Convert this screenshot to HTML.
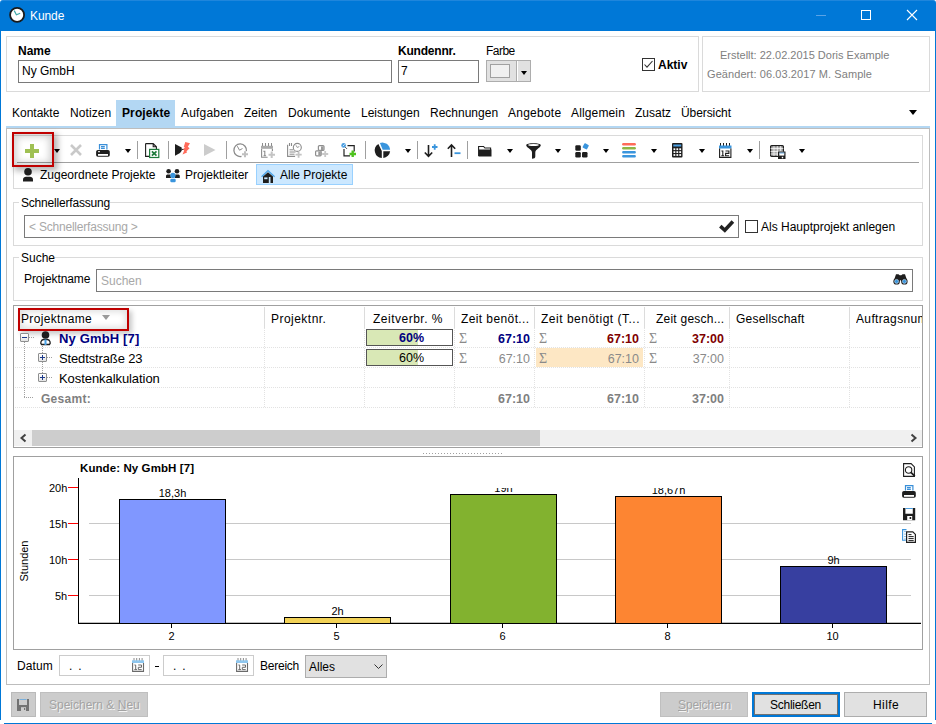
<!DOCTYPE html>
<html><head><meta charset="utf-8">
<style>
*{margin:0;padding:0;box-sizing:border-box}
html,body{width:936px;height:724px;overflow:hidden;background:#fff}
body{position:relative;font-family:"Liberation Sans",sans-serif;font-size:12px;color:#000}
.a{position:absolute}
.t{position:absolute;white-space:nowrap;line-height:14px;font-size:12px}
.b{font-weight:bold}
.box{position:absolute;border:1px solid #dadada}
.inp{position:absolute;border:1px solid #7a7a7a;background:#fff}
.arr{position:absolute;width:0;height:0;border-left:3.5px solid transparent;border-right:3.5px solid transparent;border-top:4px solid #000}
.sep{position:absolute;width:1px;background:#a0a0a0;top:141px;height:18px}
svg{position:absolute;overflow:visible}
.hs{top:307px;width:1px;height:21px;background:#dcdcdc}
.hd{left:15px;width:906px;height:1px;background:repeating-linear-gradient(to right,#e2e2e2 0 1px,transparent 1px 2px)}
.vd{top:328px;width:1px;height:80px;background:repeating-linear-gradient(to bottom,#e2e2e2 0 1px,transparent 1px 2px)}
.exp{width:9px;height:9px;border:1px solid #8e8f8f;border-radius:1px;background:linear-gradient(#fff,#e4e4e4)}
.exp .h{position:absolute;left:1px;top:3px;width:5px;height:1px;background:#1c3a8a}
.exp .v{position:absolute;left:3px;top:1px;width:1px;height:5px;background:#1c3a8a}
.pb{left:366px;width:87px;height:17px;border:1px solid #555;background:#fff;text-align:center;line-height:15px}
.pb .pf{position:absolute;left:0;top:0;width:51px;height:15px;background:#d9e8b6}
.pb span{position:relative;top:1px;left:2px;font-size:12.5px}
.sg{color:#8a8a8a;font-family:"Liberation Serif",serif;font-size:14px;line-height:15px}
.r{text-align:right;font-size:12.5px;line-height:15px}
.df{top:655px;width:91px;height:21px;border:1px solid #cccccc;background:#fff}
.gl{left:89px;width:822px;height:1px;background:#c8c8c8}
.tk{left:68px;width:10px;height:1px;background:#ff0000}
.yl{font-size:11px;line-height:13px}
.bar{border:1px solid #000}
.bl{font-size:11px;line-height:13px;text-align:center}
.xt{top:624px;width:1px;height:4px;background:#000}
.xl{top:630px;width:41px;text-align:center;font-size:11px;line-height:13px}
</style></head><body>
<!-- window frame -->
<div class="a" style="left:0;top:0;width:936px;height:31px;background:#0078d7;border-radius:3px 3px 0 0;border-top:1px solid #1f86dc"></div>
<div class="a" style="left:0;top:31px;width:1px;height:689px;background:#0078d7"></div>
<div class="a" style="left:935px;top:31px;width:1px;height:689px;background:#0078d7"></div>
<div class="a" style="left:4px;top:723px;width:928px;height:1px;background:#0078d7"></div>
<!-- title -->
<svg style="left:9px;top:7px" width="16" height="16" viewBox="0 0 16 16"><circle cx="8.1" cy="7.9" r="7" fill="#fff" stroke="#1a1a1a" stroke-width="1.8"/><path d="M5.2 3.6 L7.4 7.8 L11.2 6.2" fill="none" stroke="#3fa9a9" stroke-width="1.2"/></svg>
<div class="t" style="left:30px;top:9px;color:#fff;letter-spacing:-0.08px">Kunde</div>
<div class="a" style="left:816px;top:15px;width:10px;height:1px;background:#5aa3e6"></div>
<div class="a" style="left:861px;top:10px;width:10px;height:10px;border:1px solid #fff"></div>
<svg style="left:907px;top:10px" width="10" height="10" viewBox="0 0 10 10"><path d="M0 0L10 10M10 0L0 10" stroke="#fff" stroke-width="1.1"/></svg>

<!-- header -->
<div class="box" style="left:6px;top:36px;width:693px;height:56px"></div>
<div class="box" style="left:702px;top:36px;width:228px;height:56px"></div>
<div class="t b" style="left:18px;top:44px">Name</div>
<div class="inp" style="left:18px;top:60px;width:374px;height:23px"></div>
<div class="t" style="left:22px;top:64px">Ny GmbH</div>
<div class="t b" style="left:398px;top:44px;letter-spacing:-0.20px">Kundennr.</div>
<div class="inp" style="left:398px;top:60px;width:81px;height:23px"></div>
<div class="t" style="left:401px;top:64px">7</div>
<div class="t" style="left:486px;top:44px;letter-spacing:-0.53px">Farbe</div>
<div class="a" style="left:486px;top:60px;width:45px;height:22px;background:#e1e1e1;border:1px solid #adadad"></div>
<div class="a" style="left:516px;top:61px;width:1px;height:20px;background:#adadad"></div>
<div class="a" style="left:517px;top:61px;width:1px;height:20px;background:#fff"></div>
<div class="a" style="left:490px;top:64px;width:20px;height:14px;background:#f0f0f0;border:1px solid #a0a0a0"></div>
<div class="arr" style="left:521px;top:71px"></div>
<div class="a" style="left:642px;top:58px;width:13px;height:13px;border:1px solid #333"></div>
<svg style="left:642px;top:58px" width="13" height="13" viewBox="0 0 13 13"><path d="M2.5 6.5 L5 9.2 L10.5 3" fill="none" stroke="#333" stroke-width="1.1"/></svg>
<div class="t b" style="left:658px;top:58px">Aktiv</div>
<div class="t" style="left:720px;top:49px;color:#808080;font-size:11px;line-height:13px">Erstellt: 22.02.2015 Doris Example</div>
<div class="t" style="left:707px;top:68px;color:#808080;font-size:11px;line-height:13px;letter-spacing:0.08px">Geändert: 06.03.2017 M. Sample</div>

<!-- tabs -->
<div class="a" style="left:116px;top:100px;width:59px;height:27px;background:#b3d7f3"></div>
<div class="t" style="left:12px;top:106px">Kontakte</div>
<div class="t" style="left:70px;top:106px;letter-spacing:0.10px">Notizen</div>
<div class="t b" style="left:122px;top:106px;letter-spacing:0.12px">Projekte</div>
<div class="t" style="left:181px;top:106px;letter-spacing:0.20px">Aufgaben</div>
<div class="t" style="left:244px;top:106px;letter-spacing:-0.06px">Zeiten</div>
<div class="t" style="left:288px;top:106px;letter-spacing:0.12px">Dokumente</div>
<div class="t" style="left:361px;top:106px">Leistungen</div>
<div class="t" style="left:430px;top:106px">Rechnungen</div>
<div class="t" style="left:508px;top:106px;letter-spacing:0.24px">Angebote</div>
<div class="t" style="left:571px;top:106px;letter-spacing:0.14px">Allgemein</div>
<div class="t" style="left:635px;top:106px">Zusatz</div>
<div class="t" style="left:681px;top:106px;letter-spacing:-0.08px">Übersicht</div>
<div class="a" style="left:909px;top:110px;width:0;height:0;border-left:4.5px solid transparent;border-right:4.5px solid transparent;border-top:5px solid #000"></div>

<!-- main panel -->
<div class="a" style="left:6px;top:126px;width:924px;height:2px;background:#b3d7f3"></div>
<div class="a" style="left:6px;top:128px;width:924px;height:557px;border:1px solid #bdbdbd"></div>

<!-- toolbar box -->
<div class="box" style="left:13px;top:135px;width:910px;height:54px"></div>
<div class="a" style="left:17px;top:162px;width:902px;height:1px;background:#a0a0a0"></div>
<!-- red highlight -->
<div class="a" style="left:12px;top:132px;width:42px;height:35px;border:2px solid #c00000;box-shadow:3px 3px 6px 1px rgba(0,0,0,.28), inset 0 0 7px 3px rgba(0,0,0,.18)"></div>
<svg style="left:25px;top:144px" width="14" height="14" viewBox="0 0 14 14"><path d="M5 0h4v5h5v4h-5v5h-4v-5h-5v-4h5z" fill="#9fc053"/></svg>
<div class="arr" style="left:54px;top:149px"></div>
<svg style="left:70px;top:144px" width="12" height="12" viewBox="0 0 12 12"><path d="M1 1L11 11M11 1L1 11" stroke="#c9c9c9" stroke-width="2.6"/></svg>
<svg style="left:96px;top:144px" width="14" height="13" viewBox="0 0 14 13"><path d="M3.5 5.5V0.7h7.4v4.8M5 2.6h3.8M5 4.4h3.8" fill="none" stroke="#3a8fd8" stroke-width="1.2"/><rect x="0.1" y="6" width="13.7" height="6.8" rx="1.8" fill="#1e1e1e"/><rect x="2" y="10" width="10" height="1.8" fill="#fff"/><rect x="2" y="7.2" width="2" height="1" fill="#fff"/></svg>
<div class="arr" style="left:125px;top:149px"></div>
<div class="sep" style="left:137px"></div>
<svg style="left:145px;top:143px" width="15" height="15" viewBox="0 0 15 15"><path d="M0.6 0.6h7.6l3.2 3.2v2.5M4.5 13.4H0.6V0.6M8.2 0.6v3.2h3.2" fill="none" stroke="#1e1e1e" stroke-width="1.1"/><rect x="4.6" y="6.4" width="9.2" height="8.1" fill="#fff" stroke="#1e7b3c" stroke-width="1.2"/><path d="M6.9 8.4l4.6 4.2M11.5 8.4L6.9 12.6" stroke="#1e7b3c" stroke-width="1.7"/></svg>
<div class="sep" style="left:168px"></div>
<svg style="left:175px;top:142px" width="16" height="14" viewBox="0 0 16 14"><path d="M0 2L6.7 5.5V8.7L5 11L0 13.7Z" fill="#1e1e1e"/><path d="M6.5 7.4h2.4" stroke="#1e1e1e" stroke-width="1"/><path d="M10.3 0L15 1.2L12.8 4.8L14.6 6.3L11.5 9.3L12 10.5L7.5 12.6L9.2 8.6L8.2 7.4L9.8 5.3L8.8 4.8Z" fill="#ff6b5a"/></svg>
<svg style="left:204px;top:144px" width="12" height="12" viewBox="0 0 12 12"><path d="M0 0L11.5 6L0 12Z" fill="#cccccc"/></svg>
<div class="sep" style="left:226px"></div>
<svg style="left:233px;top:143px" width="15" height="15" viewBox="0 0 15 15"><path d="M8.5 13.4A6.3 6.3 0 1 1 13.4 8.2" fill="none" stroke="#8c8c8c" stroke-width="1.3"/><path d="M4.3 3.2L6.5 7.2L9.5 5.5" fill="none" stroke="#8c8c8c" stroke-width="1"/><path d="M9 11.3h6M12 8.3v6" stroke="#c0c0c0" stroke-width="2"/></svg>
<svg style="left:261px;top:143px" width="14" height="15" viewBox="0 0 14 15"><rect x="0" y="2.8" width="12" height="3" fill="#aaa"/><path d="M1.5 0v3M4.5 0v3M7.5 0v3M10.5 0v3" stroke="#8c8c8c" stroke-width="1"/><path d="M0.6 6v8.2h6M11.4 6v2" fill="none" stroke="#8c8c8c" stroke-width="1.1"/><path d="M2.3 8.3h1.5v4.5M2.5 12.8h2.6" fill="none" stroke="#8c8c8c" stroke-width="1.1"/><path d="M7.5 11.7h6.5M10.7 8.5v6.5" stroke="#c4c4c4" stroke-width="2"/></svg>
<svg style="left:287px;top:143px" width="15" height="15" viewBox="0 0 15 15"><path d="M0.6 1.8v11.6h7.5M2.5 0v3M4.5 0v3" fill="none" stroke="#8c8c8c" stroke-width="1.1"/><path d="M2.5 6.8h4M2.5 9h6M2.5 11.2h5" stroke="#8c8c8c" stroke-width="1"/><circle cx="10.3" cy="4.4" r="4" fill="#fff" stroke="#8c8c8c" stroke-width="1.1"/><path d="M9 2.3l1.3 2.2l2-1" fill="none" stroke="#8c8c8c" stroke-width=".9"/><path d="M8.5 11.7h6.2M11.6 8.7v6" stroke="#c4c4c4" stroke-width="1.8"/></svg>
<svg style="left:315px;top:143px" width="14" height="15" viewBox="0 0 14 15"><rect x="3.4" y="2.6" width="5.6" height="4.8" rx="1" fill="#fff" stroke="#8e8e8e" stroke-width="1.2"/><rect x="6" y="3.4" width="2.5" height="3.6" fill="#9a9a9a"/><rect x="0.6" y="7.8" width="5.6" height="5" rx="1" fill="#fff" stroke="#8e8e8e" stroke-width="1.2"/><rect x="3.3" y="8.6" width="2.5" height="3.8" fill="#9a9a9a"/><path d="M7.2 11h6M10.2 8v6" stroke="#c8c8c8" stroke-width="1.8"/></svg>
<svg style="left:341px;top:143px" width="16" height="14" viewBox="0 0 16 14"><path d="M6.5 2.6h6.7v6M9 12.8H3V6" fill="none" stroke="#222" stroke-width="1.2"/><circle cx="2.6" cy="2.4" r="2.3" fill="#4b9ee0"/><path d="M1.8 3.2l1.8-1.8" stroke="#fff" stroke-width=".8"/><path d="M4.3 4.2l1.6 1.6" stroke="#333" stroke-width="1"/><path d="M8.5 11h6.5M11.7 7.6v6.4" stroke="#4ec21e" stroke-width="2.4"/></svg>
<div class="sep" style="left:365px"></div>
<svg style="left:375px;top:143px" width="16" height="16" viewBox="0 0 16 16"><path d="M3.4 1.1L6.8 7.9V15A7.5 7.5 0 0 1 3.4 1.1Z" fill="#1e1e1e"/><path d="M4.9 0.1L7.7 6.8H15.1A7.5 7.5 0 0 0 4.9 0.1Z" fill="#3a95dd"/><path d="M8.3 8.3H15.1A7.5 7.5 0 0 1 8.3 15Z" fill="#1e1e1e"/></svg>
<div class="arr" style="left:405px;top:149px"></div>
<div class="sep" style="left:417px"></div>
<svg style="left:424px;top:143px" width="14" height="15" viewBox="0 0 14 15"><path d="M4.5 2v11.5M0.8 9.5l3.7 3.8l3.7-3.8" fill="none" stroke="#1e1e1e" stroke-width="1.6"/><path d="M8 4h5.5M10.7 1.2v5.6" stroke="#3a95dd" stroke-width="1.8"/></svg>
<svg style="left:447px;top:143px" width="14" height="15" viewBox="0 0 14 15"><path d="M4.5 14V2M0.8 5.8L4.5 2l3.7 3.8" fill="none" stroke="#1e1e1e" stroke-width="1.6"/><path d="M7.5 10.2h6" stroke="#3a95dd" stroke-width="1.8"/></svg>
<div class="sep" style="left:467px"></div>
<svg style="left:478px;top:145px" width="14" height="12" viewBox="0 0 14 12"><path d="M0.6 11.2V1.5h5l1.3 1.5h5.7v2" fill="none" stroke="#1e1e1e" stroke-width="1.1"/><path d="M1 4.5h12.5v7H1z" fill="#1e1e1e"/></svg>
<div class="arr" style="left:507px;top:149px"></div>
<svg style="left:526px;top:143px" width="15" height="16" viewBox="0 0 15 16"><path d="M0.2 2.3C0.2 -0.3 14.8 -0.3 14.8 2.3C14.8 4.5 9.3 6.5 9.3 9.5V13.5C9.3 15 8 15.6 6 15.8V9.5C6 6.5 0.2 4.5 0.2 2.3Z" fill="#1e1e1e"/><ellipse cx="7.5" cy="2" rx="5.3" ry="1.1" fill="#fff"/></svg>
<div class="arr" style="left:555px;top:149px"></div>
<svg style="left:575px;top:142px" width="15" height="16" viewBox="0 0 15 16"><rect x="0.3" y="3.2" width="5.5" height="5.5" rx="1.2" fill="#1e1e1e"/><rect x="0.3" y="10" width="5.5" height="5.5" rx="1.2" fill="#1e1e1e"/><rect x="7" y="10" width="5.5" height="5.5" rx="1.2" fill="#1e1e1e"/><rect x="8.2" y="1.8" width="5" height="5" rx="0.8" transform="rotate(28 10.7 4.3)" fill="#3a95dd"/></svg>
<div class="arr" style="left:603px;top:149px"></div>
<svg style="left:622px;top:143px" width="14" height="15" viewBox="0 0 14 15"><path d="M1.3 1.3h11.4" stroke="#ff6b5a" stroke-width="2.4" stroke-linecap="round"/><path d="M1.3 5.3h11.4" stroke="#8fb544" stroke-width="2.4" stroke-linecap="round"/><path d="M1.3 9.3h11.4M1.3 13.3h11.4" stroke="#3a95dd" stroke-width="2.4" stroke-linecap="round"/></svg>
<div class="arr" style="left:651px;top:149px"></div>
<svg style="left:672px;top:143px" width="11" height="15" viewBox="0 0 11 15"><rect x="0" y="0" width="10.5" height="14.5" rx="1" fill="#1e1e1e"/><rect x="1.3" y="1.5" width="7.9" height="2" fill="#4b9ee0"/><g fill="#fff"><rect x="1.5" y="5.3" width="1.8" height="1.8"/><rect x="4.4" y="5.3" width="1.8" height="1.8"/><rect x="7.3" y="5.3" width="1.8" height="1.8"/><rect x="1.5" y="8.2" width="1.8" height="1.8"/><rect x="4.4" y="8.2" width="1.8" height="1.8"/><rect x="7.3" y="8.2" width="1.8" height="1.8"/><rect x="1.5" y="11.1" width="1.8" height="1.8"/><rect x="4.4" y="11.1" width="1.8" height="1.8"/><rect x="7.3" y="11.1" width="1.8" height="1.8"/></g></svg>
<div class="arr" style="left:699px;top:149px"></div>
<svg style="left:719px;top:143px" width="13" height="15" viewBox="0 0 13 15"><path d="M1.5 0v3M4.5 0v3M7.5 0v3M10.5 0v3" stroke="#1e1e1e" stroke-width="1"/><rect x="0" y="2.5" width="12.5" height="3" fill="#3a95dd"/><path d="M0.6 5.5v8.9h11.3V5.5" fill="none" stroke="#1e1e1e" stroke-width="1.1"/><path d="M2.4 8h1.4v4.8M2.3 12.8h2.8M6.5 8h3.4v2.4H6.6v2.4h3.5" fill="none" stroke="#1e1e1e" stroke-width="1.1"/></svg>
<div class="arr" style="left:747px;top:149px"></div>
<div class="sep" style="left:759px"></div>
<svg style="left:770px;top:145px" width="16" height="14" viewBox="0 0 16 14"><rect x="0.6" y="0.6" width="12.8" height="10.8" rx="1" fill="#aaa" stroke="#1e1e1e" stroke-width="1.2"/><path d="M0.6 3.5h12.8M4 1v10M7.3 1v10M10.6 1v10M0.6 6.5h12.8M0.6 9h12.8" stroke="#fff" stroke-width=".7"/><rect x="8" y="6.5" width="7.5" height="7.5" fill="#1e1e1e"/><rect x="9.3" y="7.6" width="5" height="3" fill="#fff"/><rect x="9.4" y="7.6" width="5" height=".8" fill="#4b9ee0"/><rect x="11.8" y="11.8" width="1.4" height="1.5" fill="#fff"/></svg>
<div class="arr" style="left:799px;top:149px"></div>

<!-- filter row -->
<svg style="left:23px;top:168px" width="11" height="14" viewBox="0 0 11 14"><circle cx="5" cy="3.8" r="3.8" fill="#1e1e1e"/><path d="M0 13.6V11.5C0 9.8 1.5 8.8 3 8.8H7C8.5 8.8 10 9.8 10 11.5V13.6Z" fill="#1e1e1e"/></svg>
<div class="t" style="left:40px;top:168px">Zugeordnete Projekte</div>
<svg style="left:166px;top:169px" width="14" height="14" viewBox="0 0 14 14"><circle cx="2.6" cy="2.2" r="2.3" fill="#1e1e1e"/><circle cx="11" cy="2.2" r="2.3" fill="#1e1e1e"/><path d="M0 9V7C0 6 .8 5.5 1.8 5.5H4.5L5 9Z M13.8 9V7C13.8 6 13 5.5 12 5.5H9.3L8.8 9Z" fill="#1e1e1e"/><circle cx="6.9" cy="6.4" r="2.6" fill="#3a95dd"/><rect x="4.3" y="9.8" width="5.4" height="3.4" rx="1.2" fill="#3a95dd"/></svg>
<div class="t" style="left:185px;top:168px">Projektleiter</div>
<div class="a" style="left:256px;top:164px;width:97px;height:21px;background:#cce8ff;border:1px solid #99d1ff"></div>
<svg style="left:261px;top:170px" width="15" height="13" viewBox="0 0 15 13"><path d="M0.6 6.8L7 0.6L13.6 6.8" fill="none" stroke="#4aa3e8" stroke-width="1.3"/><path d="M2 12.9V6.5L7 2.2L12 6.5V12.9H9.5V7H7.8V12.9Z" fill="#1e1e1e"/><rect x="3.2" y="7.4" width="3.3" height="1.8" fill="#cce8ff"/></svg>
<div class="t" style="left:280px;top:168px">Alle Projekte</div>

<!-- Schnellerfassung -->
<div class="box" style="left:13px;top:202px;width:910px;height:44px"></div>
<div class="a" style="left:19px;top:196px;width:91px;height:12px;background:#fff"></div>
<div class="t" style="left:21px;top:196px;letter-spacing:-0.19px">Schnellerfassung</div>
<div class="inp" style="left:24px;top:215px;width:715px;height:23px"></div>
<div class="t" style="left:29px;top:220px;color:#a8a8a8;letter-spacing:-0.21px">&lt; Schnellerfassung &gt;</div>
<svg style="left:719px;top:220px" width="15" height="12" viewBox="0 0 15 12"><path d="M1.3 6.2L5.8 10.3L13.9 1.6" fill="none" stroke="#222" stroke-width="3.6"/></svg>
<div class="a" style="left:745px;top:220px;width:13px;height:13px;border:1px solid #333"></div>
<div class="t" style="left:761px;top:220px">Als Hauptprojekt anlegen</div>

<!-- Suche -->
<div class="box" style="left:13px;top:257px;width:910px;height:44px"></div>
<div class="a" style="left:19px;top:251px;width:35px;height:12px;background:#fff"></div>
<div class="t" style="left:21px;top:251px">Suche</div>
<div class="t" style="left:24px;top:272px;letter-spacing:-0.1px">Projektname</div>
<div class="inp" style="left:96px;top:269px;width:817px;height:23px"></div>
<div class="t" style="left:101px;top:274px;color:#a8a8a8">Suchen</div>
<svg style="left:893px;top:274px" width="15" height="11" viewBox="0 0 15 11"><path d="M3 0.3h2.5l1.2 1h1.6l1.2-1h2.5l2.2 6.5L9 7.8L7.5 6L6 7.8L0.8 6.8Z" fill="#1e1e1e"/><circle cx="3.6" cy="7.4" r="3.2" fill="#1e1e1e"/><circle cx="11.4" cy="7.4" r="3.2" fill="#1e1e1e"/><circle cx="3.6" cy="7.4" r="2" fill="#3a95dd" stroke="#cfe6f8" stroke-width=".6"/><circle cx="11.4" cy="7.4" r="2" fill="#3a95dd" stroke="#cfe6f8" stroke-width=".6"/></svg>

<!-- grid -->
<div class="a" style="left:13px;top:305px;width:910px;height:143px;border:1px solid #a0a0a0"></div>
<!-- header separators -->
<div class="a hs" style="left:264px"></div><div class="a hs" style="left:364px"></div><div class="a hs" style="left:454px"></div><div class="a hs" style="left:534px"></div><div class="a hs" style="left:644px"></div><div class="a hs" style="left:729px"></div><div class="a hs" style="left:849px"></div>
<div class="a" style="left:18px;top:308px;width:111px;height:23px;border:2px solid #c00000;box-shadow:3px 3px 5px 0 rgba(0,0,0,.22), inset 0 0 6px 2px rgba(0,0,0,.13)"></div>
<div class="t" style="left:21px;top:312px;letter-spacing:0.33px">Projektname</div>
<div class="a" style="left:102px;top:315px;width:0;height:0;border-left:4.5px solid transparent;border-right:4.5px solid transparent;border-top:5px solid #9a9a9a"></div>
<div class="t" style="left:271px;top:312px;letter-spacing:0.47px">Projektnr.</div>
<div class="t" style="left:373px;top:312px;letter-spacing:0.50px">Zeitverbr. %</div>
<div class="t" style="left:461px;top:312px;letter-spacing:0.40px">Zeit benöt...</div>
<div class="t" style="left:541px;top:312px;letter-spacing:0.51px">Zeit benötigt (T...</div>
<div class="t" style="left:656px;top:312px;letter-spacing:0.23px">Zeit gesch...</div>
<div class="t" style="left:736px;top:312px;letter-spacing:0.21px">Gesellschaft</div>
<div class="a" style="left:856px;top:306px;width:66px;height:22px;overflow:hidden"><div class="t" style="left:0;top:6px;letter-spacing:0.35px">Auftragsnummer</div></div>
<!-- row dividers -->
<div class="a hd" style="top:347px"></div><div class="a hd" style="top:367px"></div><div class="a hd" style="top:387px"></div><div class="a hd" style="top:407px"></div>
<div class="a vd" style="left:264px"></div><div class="a vd" style="left:364px"></div><div class="a vd" style="left:454px"></div><div class="a vd" style="left:534px"></div><div class="a vd" style="left:644px"></div><div class="a vd" style="left:729px"></div><div class="a vd" style="left:849px"></div>
<!-- tree -->
<div class="a" style="left:24px;top:342px;width:1px;height:56px;background:repeating-linear-gradient(to bottom,#a0a0a0 0 1px,transparent 1px 2px)"></div>
<div class="a" style="left:24px;top:397px;width:10px;height:1px;background:repeating-linear-gradient(to right,#a0a0a0 0 1px,transparent 1px 2px)"></div>
<div class="a" style="left:42px;top:346px;width:1px;height:27px;background:repeating-linear-gradient(to bottom,#a0a0a0 0 1px,transparent 1px 2px)"></div>
<div class="a" style="left:29px;top:337px;width:5px;height:1px;background:repeating-linear-gradient(to right,#a0a0a0 0 1px,transparent 1px 2px)"></div>
<div class="a" style="left:47px;top:357px;width:5px;height:1px;background:repeating-linear-gradient(to right,#a0a0a0 0 1px,transparent 1px 2px)"></div>
<div class="a" style="left:47px;top:377px;width:5px;height:1px;background:repeating-linear-gradient(to right,#a0a0a0 0 1px,transparent 1px 2px)"></div>
<div class="a exp" style="left:20px;top:333px"><i class="h"></i></div>
<div class="a exp" style="left:38px;top:353px"><i class="h"></i><i class="v"></i></div>
<div class="a exp" style="left:38px;top:373px"><i class="h"></i><i class="v"></i></div>
<svg style="left:40px;top:331px" width="11" height="15" viewBox="0 0 11 15"><circle cx="5.5" cy="4" r="3.8" fill="#1e1e1e"/><path d="M1.5 13.5 C0 12 1 9 3.5 8.5 L7.5 8.5 C10 9 11 12 9.5 13.5 Z" fill="none" stroke="#1e1e1e" stroke-width="1.3"/><path d="M5.5 8.5 L5.5 14" stroke="#4aa3e8" stroke-width="2"/></svg>
<div class="t b" style="left:59px;top:331px;font-size:13px;line-height:15px;color:#00007f;letter-spacing:0.15px">Ny GmbH [7]</div>
<div class="t" style="left:59px;top:351px;font-size:13px;line-height:15px;letter-spacing:-0.13px">Stedtstraße 23</div>
<div class="t" style="left:59px;top:371px;font-size:13px;line-height:15px;letter-spacing:-0.07px">Kostenkalkulation</div>
<div class="t b" style="left:41px;top:392px;font-size:12px;color:#7f7f7f;letter-spacing:0.28px">Gesamt:</div>
<!-- progress -->
<div class="a pb" style="top:329px"><div class="pf"></div><span class="b" style="color:#00007f">60%</span></div>
<div class="a pb" style="top:349px"><div class="pf"></div><span>60%</span></div>
<div class="a" style="left:536px;top:348px;width:107px;height:19px;background:#fde7c4"></div>
<div class="t sg" style="left:459px;top:331px">Σ</div><div class="t sg" style="left:539px;top:331px">Σ</div><div class="t sg" style="left:649px;top:331px">Σ</div>
<div class="t sg" style="left:459px;top:351px">Σ</div><div class="t sg" style="left:539px;top:351px">Σ</div><div class="t sg" style="left:649px;top:351px">Σ</div>
<div class="t b r" style="right:406px;top:332px;color:#00007f">67:10</div>
<div class="t b r" style="right:297px;top:332px;color:#7f0000">67:10</div>
<div class="t b r" style="right:212px;top:332px;color:#7f0000">37:00</div>
<div class="t r" style="right:406px;top:352px;color:#8a8a8a">67:10</div>
<div class="t r" style="right:297px;top:352px;color:#8a8a8a">67:10</div>
<div class="t r" style="right:212px;top:352px;color:#8a8a8a">37:00</div>
<div class="t b r" style="right:406px;top:392px;color:#7f7f7f">67:10</div>
<div class="t b r" style="right:297px;top:392px;color:#7f7f7f">67:10</div>
<div class="t b r" style="right:212px;top:392px;color:#7f7f7f">37:00</div>
<!-- scrollbar -->
<div class="a" style="left:14px;top:430px;width:908px;height:16px;background:#f0f0f0"></div>
<div class="a" style="left:32px;top:430px;width:508px;height:16px;background:#cdcdcd"></div>
<svg style="left:20px;top:434px" width="7" height="8" viewBox="0 0 7 8"><path d="M5.5 0.5 L1.5 4 L5.5 7.5" fill="none" stroke="#404040" stroke-width="2"/></svg>
<svg style="left:910px;top:434px" width="7" height="8" viewBox="0 0 7 8"><path d="M1.5 0.5 L5.5 4 L1.5 7.5" fill="none" stroke="#404040" stroke-width="2"/></svg>
<div class="a" style="left:423px;top:453px;width:80px;height:1px;background:repeating-linear-gradient(to right,#a0a0a0 0 1px,transparent 1px 3px)"></div>

<!-- chart -->
<div class="a" style="left:13px;top:456px;width:910px;height:194px;border:1px solid #a0a0a0"></div>
<div class="t b" style="left:80px;top:461px;font-size:11.5px;letter-spacing:0.09px">Kunde: Ny GmbH [7]</div>
<!-- grid lines -->
<div class="a gl" style="top:523px"></div><div class="a gl" style="top:559px"></div><div class="a gl" style="top:595px"></div>
<div class="a" style="left:78px;top:478px;width:1px;height:146px;background:#000"></div>
<div class="a" style="left:78px;top:623px;width:843px;height:1px;background:#000"></div><div class="a" style="left:78px;top:622px;width:843px;height:1px;background:rgba(0,0,0,.25)"></div>
<div class="a tk" style="top:487px"></div><div class="a tk" style="top:523px"></div><div class="a tk" style="top:559px"></div><div class="a tk" style="top:595px"></div>
<div class="t yl" style="left:49px;top:482px">20h</div>
<div class="t yl" style="left:49px;top:518px">15h</div>
<div class="t yl" style="left:49px;top:554px">10h</div>
<div class="t yl" style="left:55px;top:590px">5h</div>
<div class="t" style="left:11px;top:562px;font-size:11px;line-height:13px;transform:rotate(-90deg);transform-origin:center;width:26px;text-align:center">Stunden</div>
<svg style="left:903px;top:463px" width="13" height="14" viewBox="0 0 13 14"><path d="M0.6 0.6h7.5l3.3 3.3v9.5H0.6Z" fill="none" stroke="#1e1e1e" stroke-width="1.1"/><circle cx="5.6" cy="7" r="3.2" fill="#fff" stroke="#1e1e1e" stroke-width="1.1"/><path d="M7.9 9.3L11.8 13.2" stroke="#1e1e1e" stroke-width="1.8"/></svg>
<svg style="left:902px;top:485px" width="14" height="13" viewBox="0 0 14 13"><path d="M3.5 5.5V0.7h7.4v4.8M5 2.6h3.8M5 4.4h3.8" fill="none" stroke="#3a8fd8" stroke-width="1.2"/><rect x="0.1" y="6" width="13.7" height="6.8" rx="1.8" fill="#1e1e1e"/><rect x="2" y="10" width="10" height="1.8" fill="#fff"/></svg>
<svg style="left:903px;top:508px" width="13" height="13" viewBox="0 0 13 13"><path d="M0 0H2.4V5.8H9.8V0H12.2V12.2H0Z" fill="#1e1e1e"/><rect x="2.4" y="0" width="7.4" height="0.9" fill="#3a95dd"/><rect x="4.2" y="8" width="5" height="4.2" fill="#fff"/><rect x="6.6" y="9" width="1.6" height="2" fill="#1e1e1e"/></svg>
<svg style="left:902px;top:529px" width="14" height="14" viewBox="0 0 14 14"><path d="M4.5 0.6H0.6V11.2H3.8" fill="none" stroke="#3a95dd" stroke-width="1.1"/><path d="M2.4 2.6h1.2M2.4 5.1h1.2M2.4 7.6h1.2M2.4 10h1.2" stroke="#3a95dd" stroke-width="1"/><path d="M4.6 2.8H10.8L13.4 5.4V13.4H4.6Z" fill="#fff" stroke="#1e1e1e" stroke-width="1.2"/><path d="M6.5 5.6h3M6.5 7.6h5.2M6.5 9.6h5.2M6.5 11.6h5.2" stroke="#1e1e1e" stroke-width="1"/></svg>
<!-- clip area for bars -->
<div class="a" style="left:79px;top:488px;width:842px;height:135px;overflow:hidden">
 <div class="a bar" style="left:40px;top:11px;width:107px;height:125px;background:#8097ff"></div>
 <div class="a bar" style="left:205px;top:129px;width:107px;height:7px;background:#f2d257"></div>
 <div class="a bar" style="left:371px;top:6px;width:107px;height:130px;background:#82b22f"></div>
 <div class="a bar" style="left:536px;top:8px;width:107px;height:128px;background:#fd8532"></div>
 <div class="a bar" style="left:701px;top:78px;width:107px;height:58px;background:#373fa0"></div>
 <div class="t bl" style="left:40px;top:-1px;width:107px">18,3h</div>
 <div class="t bl" style="left:205px;top:117px;width:107px">2h</div>
 <div class="t bl" style="left:371px;top:-6px;width:107px">19h</div>
 <div class="t bl" style="left:536px;top:-4px;width:107px">18,67h</div>
 <div class="t bl" style="left:701px;top:66px;width:107px">9h</div>
</div>
<div class="a xt" style="left:171px"></div><div class="a xt" style="left:336px"></div><div class="a xt" style="left:502px"></div><div class="a xt" style="left:667px"></div><div class="a xt" style="left:832px"></div>
<div class="t xl" style="left:151px">2</div><div class="t xl" style="left:316px">5</div><div class="t xl" style="left:482px">6</div><div class="t xl" style="left:647px">8</div><div class="t xl" style="left:812px">10</div>

<!-- bottom -->
<div class="t" style="left:17px;top:659px;letter-spacing:0.13px">Datum</div>
<div class="a df" style="left:59px"></div><div class="a df" style="left:163px"></div>
<div class="t" style="left:69px;top:659px;letter-spacing:6px">..</div><div class="t" style="left:173px;top:659px;letter-spacing:6px">..</div>
<svg class="cal" style="left:132px;top:658px" width="13" height="14" viewBox="0 0 13 14"><path d="M2 0v3M4.7 0v3M7.4 0v3M10.1 0v3" stroke="#8c8c8c" stroke-width="1"/><rect x="0" y="2.3" width="12" height="2.7" fill="#8ec6ee"/><path d="M0.6 5v8.4h10.9V5" fill="none" stroke="#6a6a6a" stroke-width="1.1"/><path d="M2.4 7h1.3v4.6M2.3 11.6h2.7M6.2 7h3.3v2.3H6.3v2.3h3.4" fill="none" stroke="#6a6a6a" stroke-width="1"/></svg>
<svg class="cal" style="left:236px;top:658px" width="13" height="14" viewBox="0 0 13 14"><path d="M2 0v3M4.7 0v3M7.4 0v3M10.1 0v3" stroke="#8c8c8c" stroke-width="1"/><rect x="0" y="2.3" width="12" height="2.7" fill="#8ec6ee"/><path d="M0.6 5v8.4h10.9V5" fill="none" stroke="#6a6a6a" stroke-width="1.1"/><path d="M2.4 7h1.3v4.6M2.3 11.6h2.7M6.2 7h3.3v2.3H6.3v2.3h3.4" fill="none" stroke="#6a6a6a" stroke-width="1"/></svg>
<div class="a" style="left:155px;top:666px;width:4px;height:1px;background:#000"></div>
<div class="t" style="left:260px;top:659px;letter-spacing:-0.24px">Bereich</div>
<div class="a" style="left:305px;top:655px;width:82px;height:23px;background:#e1e1e1;border:1px solid #adadad"></div>
<div class="t" style="left:309px;top:660px">Alles</div>
<svg style="left:374px;top:664px" width="9" height="5" viewBox="0 0 9 5"><path d="M0.5 0.5L4.5 4.5L8.5 0.5" fill="none" stroke="#333" stroke-width="1"/></svg>

<div class="a" style="left:11px;top:692px;width:25px;height:25px;background:#cccccc;border:1px solid #bababa"></div>
<svg style="left:17px;top:699px" width="12" height="12" viewBox="0 0 12 12"><path d="M0 0H12V12H0Z" fill="#727272"/><rect x="2" y="0" width="8" height="6" fill="#cccccc"/><rect x="2.5" y="0" width="7" height="1" fill="#7ab0dc"/><rect x="4" y="8.2" width="5" height="3.8" fill="#cccccc"/><rect x="7" y="9" width="1.2" height="2" fill="#727272"/></svg>
<div class="a" style="left:40px;top:692px;width:108px;height:25px;background:#cccccc;border:1px solid #bfbfbf"></div>
<div class="t" style="left:49px;top:698px;color:#a3a3a3;text-shadow:1px 1px 0 #f4f4f4">Speichern &amp; <u>N</u>eu</div>
<div class="a" style="left:660px;top:692px;width:88px;height:25px;background:#cccccc;border:1px solid #bfbfbf"></div>
<div class="t" style="left:678px;top:698px;color:#a3a3a3;letter-spacing:-0.12px;text-shadow:1px 1px 0 #f4f4f4"><u>S</u>peichern</div>
<div class="a" style="left:752px;top:692px;width:88px;height:25px;background:#e1e1e1;border:2px solid #0078d7"></div>
<svg style="left:754px;top:694px" width="84" height="21" viewBox="0 0 84 21"><rect x="0.5" y="0.5" width="83" height="20" fill="none" stroke="#000" stroke-width="1" stroke-dasharray="1 1"/></svg>
<div class="t" style="left:770px;top:698px;letter-spacing:-0.26px">Schließen</div>
<div class="a" style="left:844px;top:692px;width:83px;height:25px;background:#e1e1e1;border:1px solid #adadad"></div>
<div class="t" style="left:873px;top:698px;letter-spacing:0.40px">Hilfe</div>
</body></html>
